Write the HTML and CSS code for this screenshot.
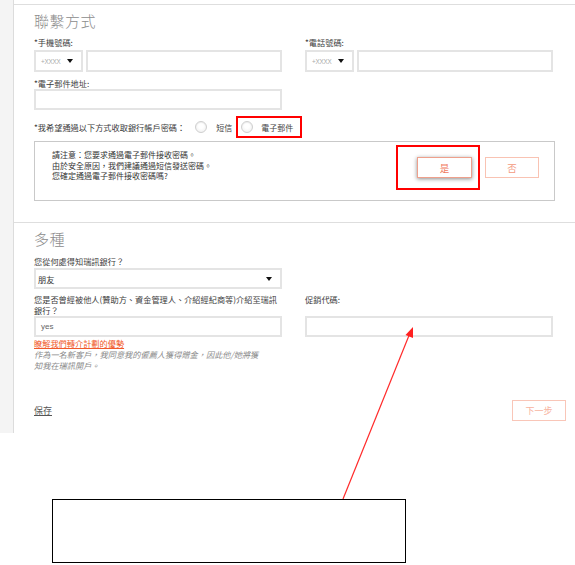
FILE: index.html
```html
<!DOCTYPE html>
<html lang="zh-Hant">
<head>
<meta charset="utf-8">
<title>聯繫方式</title>
<link rel="stylesheet" href="styles.css">
</head>
<body>
<div class="page">
  <div class="layout">
    <div class="strip"></div>
    <div class="main">
      <section class="section section-contact">
        <h2 class="title">聯繫方式</h2>
        <div class="grid row-phone">
          <div class="field">
            <div class="label">*手機號碼:</div>
            <div class="phone">
              <div class="box code"><span class="ph">+XXXX</span><span class="caret"></span></div>
              <div class="box grow"></div>
            </div>
          </div>
          <div class="field">
            <div class="label">*電話號碼:</div>
            <div class="phone">
              <div class="box code"><span class="ph">+XXXX</span><span class="caret"></span></div>
              <div class="box grow"></div>
            </div>
          </div>
        </div>
        <div class="grid row-email">
          <div class="field">
            <div class="label">*電子郵件地址:</div>
            <div class="box"></div>
          </div>
        </div>
        <div class="radio-row">
          <span class="label radio-q">*我希望通過以下方式收取銀行帳戶密碼：</span>
          <span class="radio"></span>
          <span class="radio-text">短信</span>
          <span class="hilite hilite-radio">
            <span class="radio"></span>
            <span class="radio-text">電子郵件</span>
          </span>
        </div>
        <div class="notice">
          <div class="notice-text">
            請注意：您要求通過電子郵件接收密碼。<br>
            由於安全原因，我們建議通過短信發送密碼。<br>
            您確定通過電子郵件接收密碼嗎?
          </div>
          <div class="hilite hilite-btn">
            <span class="btn btn-yes">是</span>
          </div>
          <span class="btn btn-no">否</span>
        </div>
      </section>
      <section class="section section-misc">
        <h2 class="title">多種</h2>
        <div class="grid row-source">
          <div class="field">
            <div class="label label-gap">您從何處得知瑞訊銀行？</div>
            <div class="box select"><span class="val">朋友</span><span class="caret"></span></div>
          </div>
        </div>
        <div class="grid row-ref">
          <div class="label label-ref">您是否曾經被他人(贊助方、資金管理人、介紹經紀商等)介紹至瑞訊銀行？</div>
          <div class="label">促銷代碼:</div>
          <div class="box"><span class="yes">yes</span></div>
          <div class="box"></div>
        </div>
        <div class="link-row"><a class="link" href="#">瞭解我們轉介計劃的優勢</a></div>
        <p class="hint">作為一名新客戶，我同意我的僱薦人獲得贈金，因此他/她將獲<br>知我在瑞訊開戶。</p>
        <div class="footer">
          <a class="save" href="#">保存</a>
          <span class="btn btn-next">下一步</span>
        </div>
      </section>
    </div>
  </div>
  <svg class="annot" width="575" height="565" viewBox="0 0 575 565">
    <line x1="343" y1="499" x2="410" y2="333" stroke="#ff2a2a" stroke-width="1.2"/>
    <polygon points="413,327 413,338 405.5,335" fill="#ff2020"/>
  </svg>
  <div class="callout"></div>
</div>
</body>
</html>
```
FILE: styles.css
```css
html, body {
  margin: 0;
  padding: 0;
  background: #fff;
}
body {
  font-family: "Liberation Sans", "Noto Sans CJK TC", sans-serif;
  color: #3a3a3a;
}
.page {
  position: relative;
  width: 575px;
  height: 565px;
  overflow: hidden;
}
.layout {
  display: flex;
  align-items: stretch;
}
.strip {
  width: 14px;
  background: #f4f4f4;
  border-right: 1px solid #dcdcdc;
}
.main {
  flex: 1;
  padding-top: 4px;
}
.section {
  border-top: 1px solid #dedede;
  padding: 7px 20px 21px 20px;
}
.section-misc {
  padding-bottom: 12px;
}
.title {
  margin: 0;
  font-family: "Noto Sans CJK TC", sans-serif;
  font-weight: 300;
  font-size: 15px;
  line-height: 18px;
  color: #8c8c8c;
  letter-spacing: 0.5px;
}
.grid {
  display: grid;
  grid-template-columns: 248px 248px;
  column-gap: 23px;
}
.row-phone { margin-top: 7px; }
.row-email { margin-top: 6px; }
.row-source { margin-top: 8px; }
.row-ref { margin-top: 5px; }
.label {
  font-size: 8.2px;
  line-height: 11px;
  color: #3c3c3c;
  font-family: "Noto Sans CJK TC", sans-serif;
}
.row-phone .label { margin-bottom: 2px; }
.label-gap { margin-bottom: 1px; }
.label-ref { line-height: 11px; }
.box {
  box-sizing: border-box;
  height: 22px;
  border: 2px solid #e4e4e4;
  background: #fff;
  display: flex;
  align-items: center;
}
.row-email .box,
.row-source .box,
.row-ref .box {
  height: 21px;
}
.phone {
  display: flex;
  gap: 3px;
}
.code {
  width: 49px;
  padding-left: 5px;
  padding-right: 8px;
  justify-content: space-between;
}
.grow { flex: 1; }
.ph {
  font-size: 6.3px;
  color: #a8a8a8;
  letter-spacing: -0.2px;
}
.caret {
  width: 0;
  height: 0;
  border-left: 3px solid transparent;
  border-right: 3px solid transparent;
  border-top: 4px solid #111;
}
.select {
  padding-left: 2px;
  padding-right: 8px;
  justify-content: space-between;
}
.val {
  font-family: "Noto Sans CJK TC", sans-serif;
  font-size: 8.2px;
  color: #333;
}
.yes {
  padding-left: 5px;
  font-size: 8px;
  color: #666;
}
.radio-row {
  margin-top: 6px;
  height: 22px;
  display: flex;
  align-items: center;
}
.radio-q {
  margin-right: 10px;
}
.radio {
  box-sizing: border-box;
  width: 12px;
  height: 12px;
  border-radius: 50%;
  border: 1px solid #cfcfcf;
  background: radial-gradient(circle at 50% 40%, #ffffff 30%, #ececec 100%);
  box-shadow: inset 0 1px 1px rgba(0,0,0,0.06);
}
.radio-text {
  margin-left: 9px;
  font-family: "Noto Sans CJK TC", sans-serif;
  font-size: 8px;
  color: #444;
}
.hilite {
  box-sizing: border-box;
  border: 2px solid #ff0000;
}
.hilite-radio {
  margin-left: 4px;
  height: 22px;
  display: flex;
  align-items: center;
  padding-left: 3px;
  padding-right: 7px;
}
.hilite-radio .radio-text { margin-left: 8px; }
.notice {
  box-sizing: border-box;
  margin-top: 3px;
  width: 521px;
  height: 60px;
  border: 1px solid #c9c9c9;
  padding: 3px 15px 0 17px;
  display: flex;
  align-items: flex-start;
}
.notice-text {
  flex: 1;
  margin-top: 5px;
  font-family: "Noto Sans CJK TC", sans-serif;
  font-size: 8px;
  line-height: 10.5px;
  color: #333;
}
.hilite-btn {
  padding: 10px 6px 10px 19px;
}
.btn {
  box-sizing: border-box;
  display: flex;
  align-items: center;
  justify-content: center;
  height: 21px;
  font-family: "Noto Sans CJK TC", sans-serif;
  font-size: 9.5px;
  background: #fff;
}
.btn-yes {
  width: 55px;
  border: 1px solid #eea08c;
  color: #f07a5e;
  box-shadow: 0 1px 4px rgba(0,0,0,0.45);
}
.btn-no {
  width: 54px;
  margin-left: 5px;
  margin-top: 12px;
  border: 1px solid #f9c3b3;
  color: #f39a80;
}
.link-row {
  margin-top: 1px;
  height: 11px;
  line-height: 11px;
  font-size: 8.2px;
}
.link {
  font-family: "Noto Sans CJK TC", sans-serif;
  font-size: 8.2px;
  line-height: 11px;
  color: #f15a2b;
  text-decoration: underline;
}
.hint {
  margin: 0;
  font-family: "Noto Sans CJK TC", sans-serif;
  font-size: 8.2px;
  line-height: 10.5px;
  font-style: italic;
  color: #8a8a8a;
}
.footer {
  margin-top: 30px;
  margin-right: -11px;
  display: flex;
  justify-content: space-between;
  align-items: center;
}
.save {
  font-family: "Noto Sans CJK TC", sans-serif;
  font-size: 9px;
  color: #555;
  text-decoration: underline;
}
.btn-next {
  width: 54px;
  border: 1px solid #f9c6b8;
  color: #f7b3a0;
  font-size: 9px;
}
.annot {
  position: absolute;
  left: 0;
  top: 0;
  pointer-events: none;
}
.callout {
  position: absolute;
  left: 52px;
  top: 499px;
  width: 352px;
  height: 62px;
  border: 1px solid #000;
  background: #fff;
}
```
